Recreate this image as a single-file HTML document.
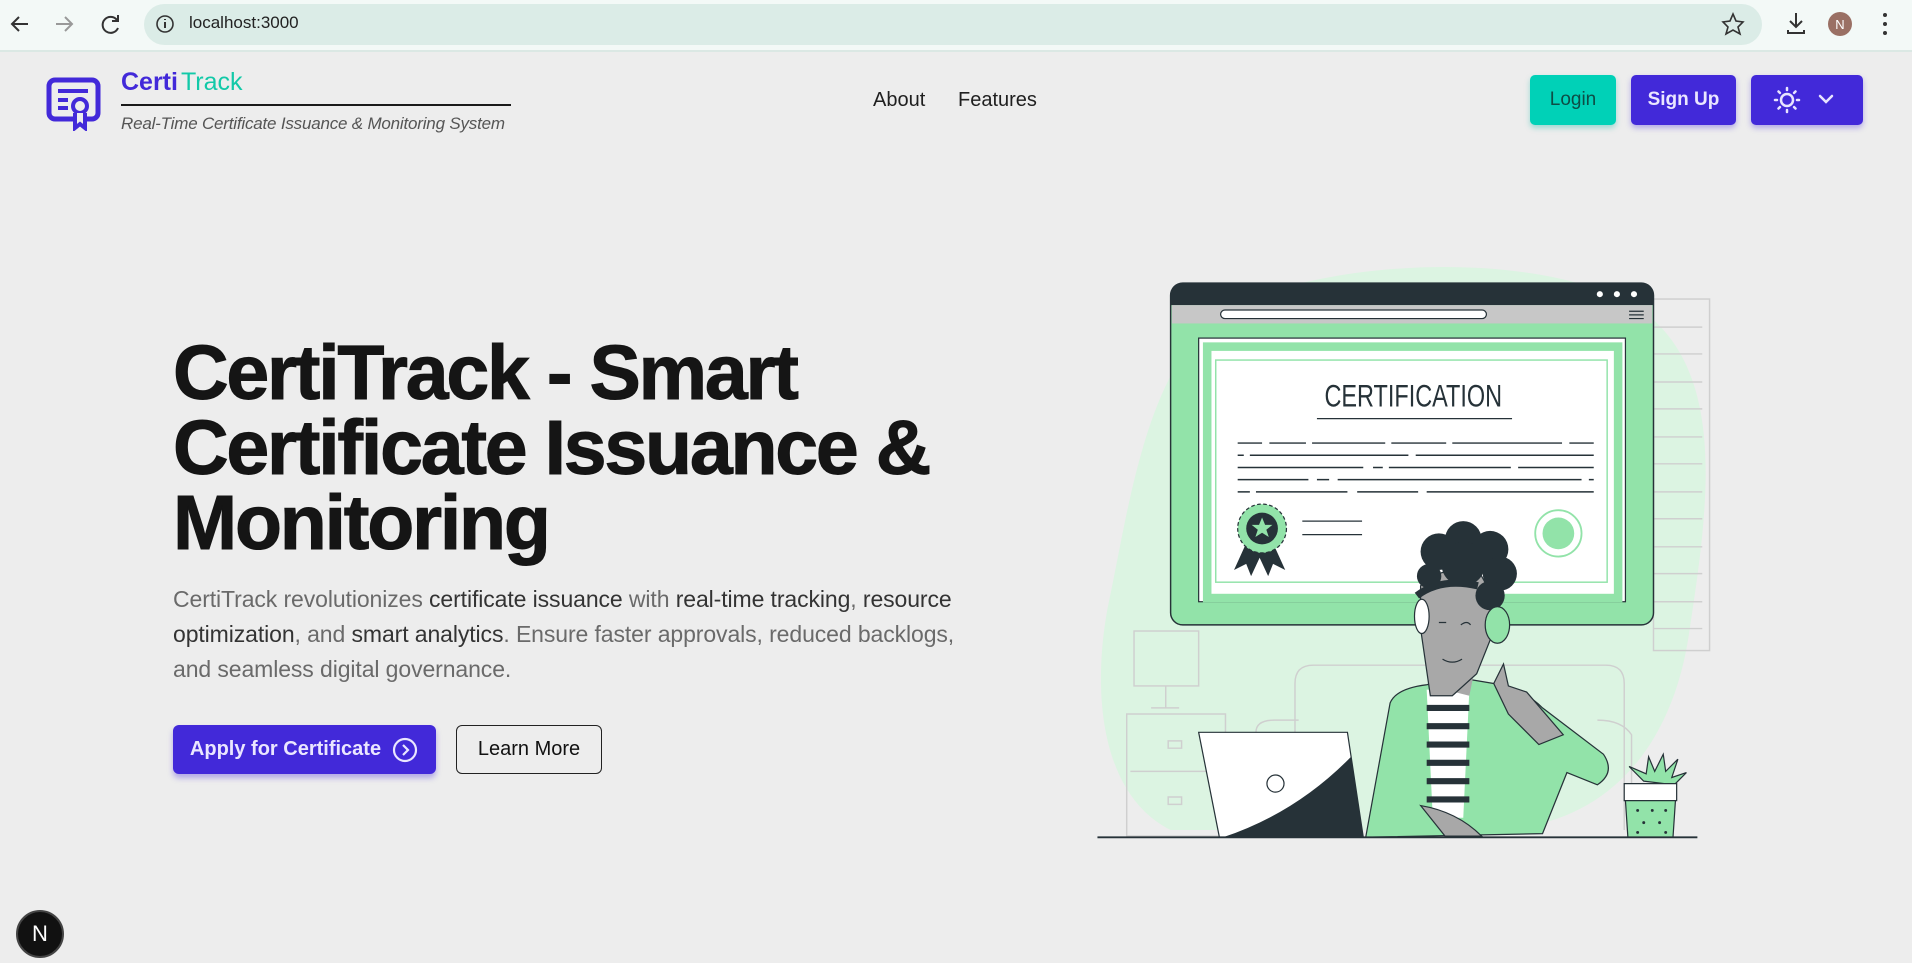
<!DOCTYPE html>
<html><head><meta charset="utf-8"><style>
*{margin:0;padding:0;box-sizing:border-box}
body{width:1912px;height:963px;overflow:hidden;background:#ededed;font-family:"Liberation Sans",sans-serif;position:relative}
.top{position:absolute;left:0;top:0;width:1912px;height:52px;background:#f3f9f7;border-bottom:2px solid #dbe8e4}
.url{position:absolute;left:144px;top:4px;width:1618px;height:41px;border-radius:21px;background:#dbece7}
.abs{position:absolute}
.btn{position:absolute;border-radius:5px;display:flex;align-items:center;justify-content:center;font-size:19px;font-weight:bold}
b{font-weight:normal;color:#333}
</style></head><body>
<div class="top">
  <div class="url"></div>
  <svg class="abs" style="left:0;top:0" width="1912" height="52">
    <g stroke="#333" stroke-width="2" fill="none">
      <path d="M28 24H12M19 17l-7 7 7 7"/>
      <path d="M56 24h16M65 17l7 7-7 7" stroke="#999"/>
      <path d="M117 20a8 8 0 1 0 1 8M118 15v6h-6"/>
      <circle cx="165" cy="24" r="8" stroke-width="1.6"/>
      <path d="M165 22v6M165 19v1"/>
      <path d="M1733 14l3 7 7 1-5 5 2 7-7-4-7 4 2-7-5-5 7-1z" stroke-width="1.6"/>
      <path d="M1796 13v14M1790 21l6 6 6-6M1788 30v3h16v-3"/>
    </g>
    <circle cx="1840" cy="24" r="12" fill="#9a7064"/>
    <text x="1840" y="29" font-size="13" fill="#fff" text-anchor="middle" font-family="Liberation Sans">N</text>
    <g fill="#333"><circle cx="1885" cy="15" r="2"/><circle cx="1885" cy="24" r="2"/><circle cx="1885" cy="33" r="2"/></g>
  </svg>
  <div class="abs" style="left:189px;top:13px;font-size:17px;color:#222">localhost:3000</div>
</div>

<svg class="abs" style="left:46px;top:76px" width="55" height="55" viewBox="0 0 55 55">
  <rect x="3" y="4" width="49" height="39" rx="6" fill="none" stroke="#4229d9" stroke-width="5"/>
  <path d="M12 15h30M12 24h10M12 32h10" stroke="#4229d9" stroke-width="4"/>
  <circle cx="34" cy="30" r="7" fill="#ededed" stroke="#4229d9" stroke-width="4"/>
  <path d="M29 37v15l5-4 5 4V37" fill="#ededed" stroke="#4229d9" stroke-width="4"/>
</svg>
<div class="abs" style="left:121px;top:68px;font-size:25px;font-weight:bold;color:#4229d9">Certi<span style="color:#12c9a8;font-weight:normal;margin-left:3px">Track</span></div>
<div class="abs" style="left:121px;top:104px;width:390px;height:2px;background:#1a1a1a"></div>
<div class="abs" style="left:121px;top:114px;font-size:17px;font-style:italic;color:#555;letter-spacing:-0.2px">Real-Time Certificate Issuance &amp; Monitoring System</div>

<div class="abs" style="left:873px;top:89px;font-size:20px;color:#1f1f1f">About</div>
<div class="abs" style="left:958px;top:89px;font-size:20px;color:#1f1f1f">Features</div>

<div class="btn" style="left:1530px;top:75px;width:86px;height:50px;background:#00d1b7;color:#0d4d45;font-weight:normal;box-shadow:0 3px 6px rgba(0,180,160,.35)">Login</div>
<div class="btn" style="left:1631px;top:75px;width:105px;height:50px;background:#4229d9;color:#eae6ff;box-shadow:0 3px 6px rgba(66,41,217,.35)">Sign Up</div>
<div class="btn" style="left:1751px;top:75px;width:112px;height:50px;background:#4229d9;box-shadow:0 3px 6px rgba(66,41,217,.35)">
  <svg width="112" height="50"><g stroke="#e8e4ff" stroke-width="2.5" fill="none" stroke-linecap="round">
    <circle cx="36" cy="25" r="6"/>
    <path d="M36 13v2M36 35v2M24 25h2M46 25h2M27.5 16.5l1.4 1.4M43.1 32.1l1.4 1.4M27.5 33.5l1.4-1.4M43.1 17.9l1.4-1.4"/>
    <path d="M69 21l6 6 6-6"/></g></svg>
</div>

<div class="abs" style="left:173px;top:336px;font-size:77px;font-weight:bold;color:#151515;line-height:75px;letter-spacing:-2.2px;-webkit-text-stroke:1px #151515">CertiTrack - Smart<br>Certificate Issuance &amp;<br>Monitoring</div>

<div class="abs" style="left:173px;top:582px;font-size:23px;color:#6a6a6a;line-height:35px;white-space:nowrap;letter-spacing:-0.1px">CertiTrack revolutionizes <b>certificate issuance</b> with <b>real-time tracking</b>, <b>resource<br>optimization</b>, and <b>smart analytics</b>. Ensure faster approvals, reduced backlogs,<br>and seamless digital governance.</div>

<div class="btn" style="left:173px;top:725px;width:263px;height:49px;background:#4229d9;color:#eae6ff;font-size:20px;border-radius:6px;box-shadow:0 4px 6px rgba(66,41,217,.35)">Apply for Certificate
  <svg width="28" height="28" style="margin-left:10px"><circle cx="14" cy="14" r="11" fill="none" stroke="#eae6ff" stroke-width="2.2"/><path d="M12 9l5 5-5 5" fill="none" stroke="#eae6ff" stroke-width="2.2"/></svg></div>
<div class="btn" style="left:456px;top:725px;width:146px;height:49px;border:1.5px solid #222;color:#111;font-weight:normal;font-size:20px;border-radius:6px">Learn More</div>

<svg class="abs" style="left:0;top:0" width="1912" height="963" viewBox="0 0 1568 789" preserveAspectRatio="none">
  <path d="M1000 260 C1060 215 1250 200 1340 250 C1420 300 1400 420 1385 520 C1370 620 1310 680 1220 680 L960 680 C900 650 895 560 910 490 C925 420 940 300 1000 260Z" fill="#dcf4e2"/>
  <g stroke="#cfcfcf" fill="none" stroke-width="1.2">
    <rect x="1356" y="245" width="46" height="288"/>
    <path d="M1356 268h40M1356 290h40M1356 313h40M1356 335h40M1356 358h40M1356 380h40M1356 403h40M1356 425h40M1356 448h40M1356 470h40M1356 493h40M1356 515h40"/>
    <rect x="930" y="517" width="53" height="45"/>
    <path d="M956 562v18M944 580h23"/>
    <rect x="924" y="585" width="81" height="100"/>
    <path d="M927 632h76M958 607h11v6h-11zM958 653h11v6h-11z"/>
    <path d="M1062 680V560q0-15 15-15h240q15 0 15 15v120"/>
    <path d="M1030 600q0-10 15-10h20M1310 590q20 0 28 12v78"/>
  </g>
  <rect x="960" y="232" width="396" height="280" rx="10" fill="#92e3a9" stroke="#263238" stroke-width="1.2"/>
  <path d="M960 250v-8q0-10 10-10h376q10 0 10 10v8z" fill="#263238"/>
  <rect x="961" y="250" width="394" height="15" fill="#c7c7c7"/>
  <rect x="1001" y="254" width="218" height="7" rx="3.5" fill="#fff" stroke="#263238"/>
  <g fill="#fff"><circle cx="1312" cy="241" r="2.5"/><circle cx="1326" cy="241" r="2.5"/><circle cx="1340" cy="241" r="2.5"/></g>
  <path d="M1336 255h12M1336 258h12M1336 261h12" stroke="#263238"/>
  <rect x="983" y="277" width="350" height="216" fill="#fff" stroke="#263238"/>
  <rect x="990" y="284" width="337" height="206" fill="none" stroke="#92e3a9" stroke-width="7"/>
  <rect x="997" y="295" width="321" height="182" fill="none" stroke="#92e3a9" stroke-width="1.2"/>
  <text x="1159" y="333" font-size="26" fill="#263238" text-anchor="middle" font-family="Liberation Sans Narrow, Liberation Sans" transform="translate(1159 0) scale(0.74 1) translate(-1159 0)">CERTIFICATION</text>
  <path d="M1080 343h160" stroke="#263238"/>
  <g stroke="#263238" stroke-width="1.2">
    <path d="M1015 363h292" stroke-dasharray="20 6 30 5 60 5 45 5 90 6 30"/>
    <path d="M1015 373h292" stroke-dasharray="5 5 130 6 150"/>
    <path d="M1015 383h292" stroke-dasharray="103 8 8 5 100 6 70 6 15"/>
    <path d="M1015 393h292" stroke-dasharray="58 7 10 7 200 6 60"/>
    <path d="M1015 403h292" stroke-dasharray="10 5 75 8 50 7 145 7 60"/>
  </g>
  <path d="M1022 445l-10 22 10-5 4 10 7-15 7 15 4-10 10 5-10-22z" fill="#263238"/>
  <circle cx="1035" cy="433" r="20" fill="#92e3a9" stroke="#263238" stroke-dasharray="3 2"/>
  <circle cx="1035" cy="433" r="13" fill="#263238"/>
  <path d="M1035 424l2.5 6h6l-5 4 2 6-5.5-3.5-5.5 3.5 2-6-5-4h6z" fill="#92e3a9"/>
  <path d="M1068 427h49M1068 438h49" stroke="#263238"/>
  <circle cx="1278" cy="437" r="19" fill="#fff" stroke="#92e3a9" stroke-width="1.5"/>
  <circle cx="1278" cy="437" r="13" fill="#92e3a9"/>
  <!-- woman -->
  <path d="M1120 686l20-110q5-12 30-15l25-6 30 5q25 5 40 20l50 38q10 15-5 25l-25-10-20 50z" fill="#92e3a9" stroke="#263238"/>
  <path d="M1170 565h35l-5 105h-25z" fill="#fff"/>
  <g stroke="#263238" stroke-width="5"><path d="M1170 580h35M1170 595h35M1170 610h35M1170 625h35M1170 640h35M1170 655h35"/></g>
  <path d="M1225 560l8-16 4 18 15 5 30 35-20 8-25-25z" fill="#a8a8a8" stroke="#263238"/>
  <path d="M1185 545l0 20 20 5 5-25z" fill="#a8a8a8"/>
  <path d="M1165 480q20-20 50-8 12 20 8 50l-12 30-20 18h-18l-8-55z" fill="#a8a8a8" stroke="#263238"/>
  <g fill="#263238">
    <circle cx="1180" cy="452" r="15"/><circle cx="1200" cy="442" r="15"/><circle cx="1222" cy="450" r="15"/>
    <circle cx="1230" cy="470" r="14"/><circle cx="1222" cy="488" r="12"/><circle cx="1172" cy="472" r="10"/>
    <circle cx="1200" cy="462" r="18"/>
  </g>
  <path d="M1162 488q20-15 50-8" stroke="#263238" stroke-width="6" fill="none"/>
  <ellipse cx="1228" cy="512" rx="10" ry="15" fill="#92e3a9" stroke="#263238"/>
  <ellipse cx="1166" cy="505" rx="6" ry="14" fill="#fff" stroke="#263238"/>
  <path d="M1183 540q8 5 16 0M1180 510h6M1198 512q5-4 8 0" stroke="#263238" fill="none"/>
  <path d="M1165 660q30 5 50 25h-30z" fill="#a8a8a8" stroke="#263238"/>
  <path d="M983 600h122l13 86H1000z" fill="#fff" stroke="#263238"/>
  <path d="M1108 620l10 66h-115q60-20 105-66z" fill="#263238"/>
  <circle cx="1046" cy="642" r="7" fill="#fff" stroke="#263238"/>
  <path d="M1348 640l-12-12 14 6 2-14 5 12 7-14 2 14 10-10-5 15 12-4-10 10z" fill="#92e3a9" stroke="#263238"/>
  <path d="M1332 642h43v14h-43z" fill="#fff" stroke="#263238"/>
  <path d="M1333 656h41l-2 30h-37z" fill="#92e3a9" stroke="#263238"/>
  <g fill="#263238"><circle cx="1343" cy="664" r="1.2"/><circle cx="1355" cy="664" r="1.2"/><circle cx="1366" cy="664" r="1.2"/><circle cx="1348" cy="674" r="1.2"/><circle cx="1361" cy="674" r="1.2"/><circle cx="1343" cy="682" r="1.2"/><circle cx="1366" cy="682" r="1.2"/></g>
  <path d="M900 686h492" stroke="#263238" stroke-width="1.5"/>
</svg>

<div class="abs" style="left:16px;top:910px;width:48px;height:48px;border-radius:50%;background:#111;border:2px solid #444;color:#fff;font-size:22px;display:flex;align-items:center;justify-content:center">N</div>
</body></html>
